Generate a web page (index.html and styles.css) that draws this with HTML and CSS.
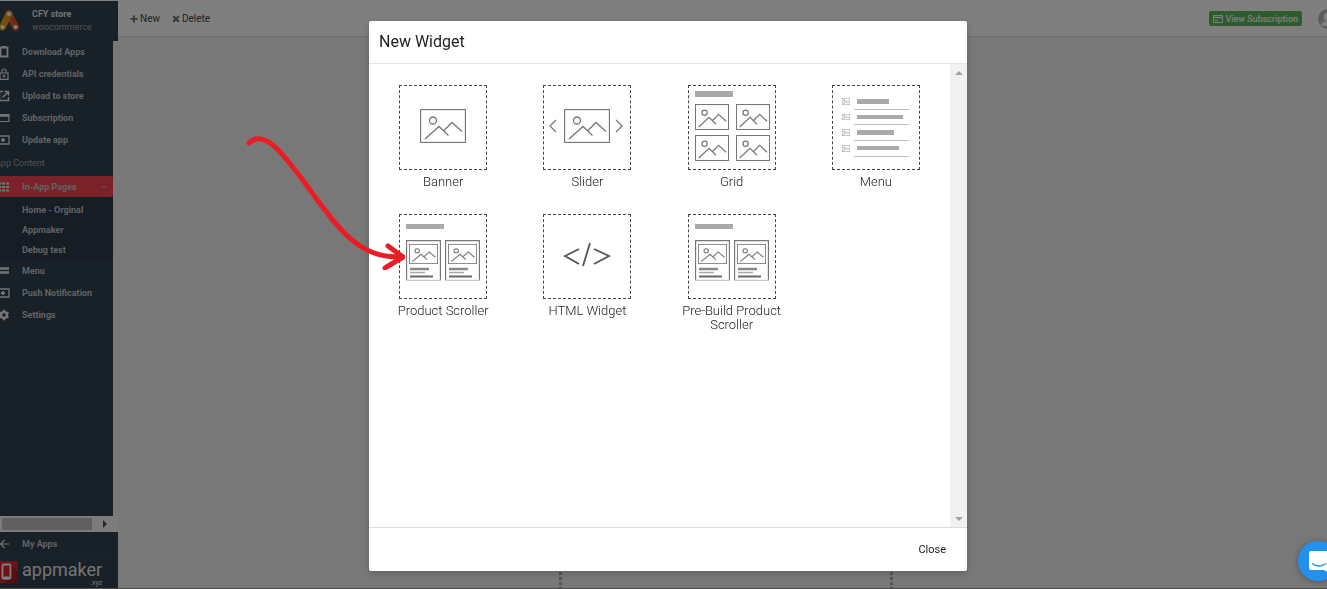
FILE: index.html
```html
<!DOCTYPE html>
<html lang="en">
<head>
    <meta charset="UTF-8">
    <meta name="viewport" content="width=device-width, initial-scale=1.0">
    <title>CFY store - In-App Pages</title>
    <link rel="stylesheet" href="styles.css">
</head>
<body>
    <!-- Shared icon shapes -->
    <svg class="defs" aria-hidden="true">
        <symbol id="picture" viewBox="0 0 46 34" preserveAspectRatio="none">
            <rect x="0.5" y="0.5" width="45" height="33"/>
            <circle cx="13" cy="11.500" r="3.500"/>
            <path d="M5 30 19 17.500 28.500 26.500M23.500 22 32 13.500 42 22.500"/>
        </symbol>
        <symbol id="product" viewBox="0 0 35 41">
            <path d="M.5 41V.5h34V41" stroke="#777"/>
            <path d="M0 40.500h35" stroke="#ccc"/>
            <use href="#picture" x="3" y="4" width="29" height="20" stroke-width="1.800"/>
            <path d="M4 29h19" stroke="#888" stroke-width="2.500"/>
            <path d="M4 32.500h15" stroke="#aaa" stroke-width="1.500"/>
            <path d="M4 36.500h23" stroke="#666" stroke-width="2"/>
        </symbol>
        <symbol id="notify" viewBox="0 0 12 12">
            <path d="M0 2h11v8H0" fill="none" stroke="currentColor" stroke-width="1.300"/>
            <path d="M5 4v4M3 6h4" stroke="currentColor" stroke-width="1.800"/>
        </symbol>
    </svg>

    <div class="app">
        <aside class="sidebar">
            <div class="store">
                <svg class="store-logo" viewBox="0 0 22 24" aria-hidden="true">
                    <path d="M11 5 17.500 18" stroke="#e8572d" stroke-width="7" stroke-linecap="round"/>
                    <path d="M11 5 4.500 18" stroke="#e79a1e" stroke-width="7" stroke-linecap="round"/>
                    <circle cx="11" cy="5" r="2" fill="#fff"/>
                    <circle cx="4.500" cy="18" r="2" fill="#fff"/>
                    <circle cx="17.500" cy="18" r="2" fill="#fff"/>
                </svg>
                <div class="store-text">
                    <div class="store-name">CFY store</div>
                    <div class="store-type">woocommerce</div>
                </div>
            </div>

            <nav class="menu">
                <div class="menu-inner">
                    <a class="item" href="#">
                        <svg viewBox="0 0 12 12"><path d="M2.500 1.500h7v9h-7zM4 .5h4" fill="none" stroke="currentColor" stroke-width="1.800"/></svg>
                        Download Apps
                    </a>
                    <a class="item" href="#">
                        <svg viewBox="0 0 12 12"><path d="M2 5h8v6.300H2zM4 5V3a2 2 0 0 1 4 0v2M6 6.500v3M4.500 8h3" fill="none" stroke="currentColor" stroke-width="1.200"/></svg>
                        API credentials
                    </a>
                    <a class="item" href="#">
                        <svg viewBox="0 0 12 12"><path d="M5 1.500H1.500v9h9V7M6.500 1.500h4v4M10.500 1.500 4.500 7.500" fill="none" stroke="currentColor" stroke-width="1.500"/></svg>
                        Upload to store
                    </a>
                    <a class="item" href="#">
                        <svg viewBox="0 0 12 12"><path d="M.5 2.500h10.500v7H.5z" fill="none" stroke="currentColor" stroke-width="1.200"/><path d="M0 3.500h11" stroke="currentColor" stroke-width="2.500"/></svg>
                        Subscription
                    </a>
                    <a class="item" href="#">
                        <svg><use href="#notify"/></svg>
                        Update app
                    </a>
                    <div class="menu-heading">App Content</div>
                    <a class="item active" href="#">
                        <svg viewBox="0 0 12 12"><path d="M0 2.500h11M0 6h11M0 9.500h11" stroke="currentColor" stroke-width="2" stroke-dasharray="3 1"/></svg>
                        In-App Pages
                        <span class="caret"></span>
                    </a>
                    <div class="submenu">
                        <a href="#">Home - Orginal</a>
                        <a href="#">Appmaker</a>
                        <a href="#">Debug test</a>
                    </div>
                    <a class="item" href="#">
                        <svg viewBox="0 0 12 12"><path d="M0 3.500h11M0 7.500h11" stroke="currentColor" stroke-width="2.500"/></svg>
                        Menu
                    </a>
                    <a class="item" href="#">
                        <svg><use href="#notify"/></svg>
                        Push Notification
                    </a>
                    <a class="item" href="#">
                        <svg viewBox="0 0 12 12"><circle cx="6" cy="6" r="3" fill="none" stroke="currentColor" stroke-width="2.400"/><path d="M6 .8v1.700M6 9.500v1.700M1.500 3.400l1.500.9M9 7.700l1.500.9M1.500 8.600 3 7.700M9 4.300l1.500-.9" stroke="currentColor" stroke-width="2.200"/></svg>
                        Settings
                    </a>
                </div>
            </nav>

            <div class="hscroll">
                <span class="hscroll-thumb"></span>
                <span class="hscroll-arrow"></span>
            </div>

            <a class="my-apps" href="#">
                <svg viewBox="0 0 12 12"><path d="M11 6H2.500M6.500 2l-4 4 4 4" fill="none" stroke="currentColor" stroke-width="1.200"/></svg>
                My Apps
            </a>
            <div class="brand">
                <svg class="brand-logo" viewBox="0 0 22 22" aria-hidden="true">
                    <rect width="22" height="22" rx="3" fill="#e0242c"/>
                    <path d="M14 3 22 11v8a3 3 0 0 1-3 3h-8L6 18z" fill="#a81a22"/>
                    <rect x="6.500" y="3.500" width="8" height="14" rx="1" fill="#e0242c" stroke="#fff" stroke-width="1.800"/>
                    <path d="M8 17h5" stroke="#fff" stroke-width="3"/>
                </svg>
                <div class="brand-text">
                    <div class="brand-name">appmaker</div>
                    <div class="brand-tld">.xyz</div>
                </div>
            </div>
        </aside>

        <main class="content">
            <header class="topbar">
                <button class="tool" type="button">
                    <svg viewBox="0 0 8 8"><path d="M4 .5v7M.5 4h7" stroke="currentColor" stroke-width="2"/></svg>
                    New
                </button>
                <button class="tool" type="button">
                    <svg viewBox="0 0 8 8"><path d="m1.200 1.200 5.600 5.600M6.800 1.200 1.200 6.800" stroke="currentColor" stroke-width="2.200"/></svg>
                    Delete
                </button>
                <a class="subscription" href="#">
                    <svg viewBox="0 0 10 8"><path d="M.5.5h9v7h-9z" fill="none" stroke="currentColor"/><path d="M0 2.500h10" stroke="currentColor" stroke-width="1.500"/><path d="M2 5.500h3" stroke="currentColor"/></svg>
                    View Subscription
                </a>
                <svg class="avatar" viewBox="0 0 20 20" aria-hidden="true">
                    <circle cx="10" cy="10" r="10" fill="#b8b8b8"/>
                    <circle cx="10" cy="8" r="4.500" fill="#fff"/>
                    <path d="M3 17a7 5 0 0 1 14 0z" fill="#fff"/>
                </svg>
            </header>
            <div class="canvas">
                <div class="drop-zone"></div>
            </div>
        </main>
    </div>

    <div class="backdrop">
        <section class="modal" role="dialog" aria-labelledby="modalTitle">
            <h1 class="modal-title" id="modalTitle">New Widget</h1>
            <div class="modal-body">
                <div class="widgets">
                    <button class="widget" type="button">
                        <svg class="preview" viewBox="1 1 86 83">
                            <use href="#picture" x="21" y="24" width="46" height="34"/>
                        </svg>
                        Banner
                    </button>
                    <button class="widget" type="button">
                        <svg class="preview" viewBox="1 1 86 83">
                            <use href="#picture" x="21" y="24" width="46" height="34"/>
                            <path d="m13 35-6 6 6 6M73 35l6 6-6 6"/>
                        </svg>
                        Slider
                    </button>
                    <button class="widget" type="button">
                        <svg class="preview" viewBox="1 1 86 83">
                            <path class="bar" d="M7 6h38v6H7z"/>
                            <g stroke-width="1.700">
                                <use href="#picture" x="7" y="19" width="34" height="26"/>
                                <use href="#picture" x="48" y="19" width="34" height="26"/>
                                <use href="#picture" x="7" y="50" width="34" height="26"/>
                                <use href="#picture" x="48" y="50" width="34" height="26"/>
                            </g>
                        </svg>
                        Grid
                    </button>
                    <button class="widget" type="button">
                        <svg class="preview" viewBox="1 1 86 83">
                            <g stroke="#999" stroke-width="4">
                                <use href="#picture" x="10" y="13" width="8" height="7"/>
                                <use href="#picture" x="10" y="29" width="8" height="6"/>
                                <use href="#picture" x="10" y="44" width="8" height="7"/>
                                <use href="#picture" x="10" y="60" width="8" height="7"/>
                            </g>
                            <path class="bar" d="M25 14h32v5H25zM25 30h46v4H25zM25 45h37v5H25zM25 61h42v4H25z"/>
                            <path d="M22 24.500h55M22 39.500h55M22 55.500h55M22 71.500h55" stroke="#bbb" stroke-width="1"/>
                        </svg>
                        Menu
                    </button>
                    <button class="widget" type="button">
                        <svg class="preview" viewBox="1 1 86 83">
                            <path class="bar" d="M7 10h38v5H7z"/>
                            <use href="#product" x="7" y="26" width="35" height="41"/>
                            <use href="#product" x="46" y="26" width="35" height="41"/>
                        </svg>
                        Product Scroller
                    </button>
                    <button class="widget" type="button">
                        <svg class="preview" viewBox="1 1 86 83">
                            <path d="M36 35 22 42l14 8M51 35l15 7-15 8M47 29l-7 23" stroke="#555" stroke-width="1.800"/>
                        </svg>
                        HTML Widget
                    </button>
                    <button class="widget" type="button">
                        <svg class="preview" viewBox="1 1 86 83">
                            <path class="bar" d="M7 10h38v5H7z"/>
                            <use href="#product" x="7" y="26" width="35" height="41"/>
                            <use href="#product" x="46" y="26" width="35" height="41"/>
                        </svg>
                        Pre-Build Product Scroller
                    </button>
                </div>
                <div class="vscroll">
                    <span class="arrow-up"></span>
                    <span class="arrow-down"></span>
                </div>
            </div>
            <div class="modal-footer">
                <button class="close-button" type="button">Close</button>
            </div>
        </section>
    </div>

    <svg class="pointer" viewBox="0 0 160 136" aria-hidden="true">
        <path d="M4 9C10 3 19 3 29 12C56 36 84 92 115 112C129 121 141 123 158 123M143 112l15 11-18 11"/>
    </svg>

    <button class="chat" type="button" aria-label="Open chat">
        <svg viewBox="0 0 40 40">
            <path d="M13 10h16a2 2 0 0 1 2 2v20l-5-3H13a2 2 0 0 1-2-2V12a2 2 0 0 1 2-2z" fill="#fff"/>
            <path d="M14 22.500q7 5 14 0" fill="none" stroke="#2490ee" stroke-width="1.500"/>
        </svg>
    </button>
</body>
</html>
```

FILE: styles.css
```css
* {
    box-sizing: border-box;
}

body {
    margin: 0;
    height: 100vh;
    overflow: hidden;
    background: #f0f0f0;
    font-family: Roboto, 'Liberation Sans', sans-serif;
    font-size: 10px;
}

a {
    color: inherit;
    text-decoration: none;
}

button {
    background: none;
    border: none;
    padding: 0;
    color: inherit;
    font: inherit;
    cursor: pointer;
}

.defs {
    position: absolute;
    width: 0;
    height: 0;
}

.app {
    display: flex;
    height: 100vh;
    border-top: 1px solid #fff;
    border-bottom: 1px solid #999;
}

/* Sidebar */
.sidebar {
    display: flex;
    flex-direction: column;
    flex: none;
    width: 118px;
    overflow: hidden;
    color: #c0c4c8;
    font-size: 9px;
    font-weight: 700;
}

.store {
    display: flex;
    align-items: center;
    gap: 12px;
    height: 40px;
    flex: none;
    background: #304050;
}

.store-logo {
    width: 22px;
    height: 24px;
    margin-left: -2px;
    fill: none;
}

.store-name {
    color: #e0e0e0;
    line-height: 13px;
}

.store-type {
    color: #a0a4a8;
    font-weight: 400;
    line-height: 13px;
}

.menu {
    flex: 1;
    margin-right: 5px;
    overflow: hidden;
    background: #304050;
}

/* scrolled slightly to the right */
.menu-inner {
    margin-left: -10px;
}

.item,
.my-apps {
    display: flex;
    align-items: center;
    gap: 12px;
    height: 22px;
    padding-left: 8px;
}

.item svg,
.my-apps svg {
    width: 12px;
    height: 12px;
    color: #e8e8e8;
}

.menu-heading {
    height: 25px;
    padding-left: 5px;
    color: #a0a4a8;
    font-weight: 400;
    line-height: 25px;
}

.item.active {
    height: 21px;
    background: #f84454;
    border-radius: 0 2px 2px 0;
}

.caret {
    margin-left: auto;
    margin-right: 6px;
    border: 3px solid transparent;
    border-top: none;
    border-bottom-color: #d0888c;
}

.submenu {
    padding: 3px 0 0 32px;
    background: #2c3a48;
}

.submenu a {
    display: block;
    line-height: 20px;
}

.hscroll {
    display: flex;
    align-items: center;
    justify-content: space-between;
    flex: none;
    height: 16px;
    padding: 0 6px 0 2px;
    background: #f8f8f8;
}

.hscroll-thumb {
    width: 90px;
    height: 12px;
    background: #c0c0c0;
}

.hscroll-arrow {
    border: 4px solid transparent;
    border-right: none;
    border-left-color: #505050;
    margin-right: 5px;
}

.my-apps {
    flex: none;
    height: 24px;
    padding-left: 0;
    background: #304050;
    border-bottom: 1px solid #384858;
}

.my-apps svg {
    margin-left: -2px;
}

.brand {
    display: flex;
    align-items: center;
    gap: 4px;
    flex: none;
    height: 32px;
    background: #304050;
}

.brand-logo {
    flex: none;
    width: 22px;
    height: 22px;
    margin-left: -4px;
}

.brand-text {
    color: #e8e8e8;
    font-weight: 400;
}

.brand-name {
    font-size: 18px;
    line-height: 21px;
}

.brand-tld {
    font-size: 7px;
    line-height: 6px;
    text-align: right;
}

/* Page content */
.content {
    display: flex;
    flex-direction: column;
    flex: 1;
    min-width: 0;
}

.topbar {
    display: flex;
    align-items: center;
    gap: 12px;
    flex: none;
    height: 36px;
    padding-left: 12px;
    overflow: hidden;
    background: #fff;
    border-bottom: 1px solid #e0e0e0;
}

.tool {
    display: flex;
    align-items: center;
    gap: 2px;
    color: #444;
}

.tool svg {
    width: 8px;
    height: 8px;
    color: #777;
}

.subscription {
    display: flex;
    align-items: center;
    gap: 2px;
    height: 15px;
    margin-left: auto;
    padding: 0 4px;
    background: #5cb85c;
    border-radius: 2px;
    color: #fff;
    font-size: 9px;
    font-weight: 500;
}

.subscription svg {
    width: 10px;
    height: 8px;
}

.avatar {
    flex: none;
    width: 20px;
    height: 20px;
    margin-left: 4px;
    margin-right: -11px;
}

.canvas {
    display: flex;
    flex: 1;
    justify-content: center;
    padding-left: 6px;
}

.drop-zone {
    width: 334px;
    background:
        repeating-linear-gradient(#aaa 0 3px, transparent 3px 5px) left / 3px 100% no-repeat,
        repeating-linear-gradient(#aaa 0 3px, transparent 3px 5px) right / 3px 100% no-repeat;
}

/* Modal */
.backdrop {
    position: fixed;
    inset: 0;
    display: flex;
    justify-content: center;
    padding: 21px 0 18px 9px;
    background: rgba(0, 0, 0, 0.5);
}

.modal {
    display: flex;
    flex-direction: column;
    width: 598px;
    max-width: 100%;
    background: #fff;
    border-radius: 2px;
    box-shadow: 0 2px 8px rgba(0, 0, 0, 0.2);
    color: #222;
}

.modal-title {
    margin: 0;
    padding: 0 10px;
    border-bottom: 1px solid #e5e5e5;
    font-size: 16px;
    font-weight: 400;
    line-height: 42px;
}

.modal-body {
    display: flex;
    flex: 1;
    min-height: 0;
}

.widgets {
    display: grid;
    grid-template-columns: repeat(4, 1fr);
    align-content: start;
    row-gap: 18px;
    flex: 1;
    padding: 21px 2px;
}

.widget {
    display: flex;
    flex-direction: column;
    align-items: center;
    gap: 5px;
    min-height: 111px;
    padding: 0 16px;
    font-size: 13px;
    font-weight: 300;
    line-height: 14px;
}

.preview {
    width: 88px;
    height: 85px;
    border: 1px dashed #444;
    fill: none;
    stroke: #777;
    stroke-width: 1.3;
}

.bar {
    fill: #aaa;
    stroke: none;
}

.vscroll {
    display: flex;
    flex-direction: column;
    align-items: center;
    justify-content: space-between;
    width: 17px;
    padding: 7px 0 6px;
    background: #f1f1f1;
}

.arrow-up,
.arrow-down {
    border: 4px solid transparent;
}

.arrow-up {
    border-top: none;
    border-bottom-color: #a3a3a3;
}

.arrow-down {
    border-bottom: none;
    border-top-color: #a3a3a3;
}

.modal-footer {
    display: flex;
    align-items: center;
    justify-content: flex-end;
    height: 44px;
    padding-right: 21px;
    border-top: 1px solid #ddd;
}

.close-button {
    font-size: 11px;
}

/* Drawn over the page */
.pointer {
    position: absolute;
    left: 245px;
    top: 134px;
    width: 160px;
    height: 136px;
    fill: none;
    stroke: #ed1c24;
    stroke-width: 5;
    stroke-linecap: round;
    stroke-linejoin: round;
}

.chat {
    position: fixed;
    right: -11px;
    bottom: 8px;
    width: 40px;
    height: 40px;
    background: #2490ee;
    border-radius: 50%;
    box-shadow: 0 1px 6px rgba(0, 0, 0, 0.3);
}

.chat svg {
    display: block;
    width: 40px;
    height: 40px;
}
```
